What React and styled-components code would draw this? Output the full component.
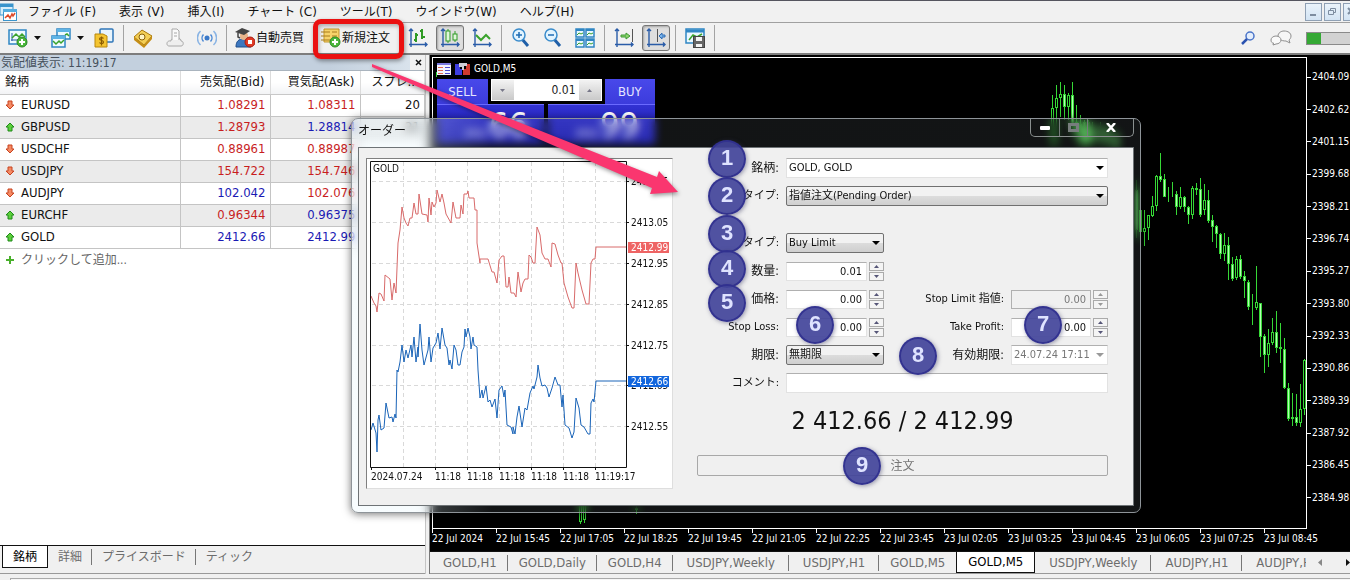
import React from 'react';
import styled, { createGlobalStyle, css } from 'styled-components';

const UI_FONT = "'DejaVu Sans Condensed', 'Noto Sans', 'Noto Sans CJK JP', sans-serif";
const WIDE_FONT = "'DejaVu Sans', 'Noto Sans CJK JP', sans-serif";

const GlobalStyle = createGlobalStyle`
  * {
    box-sizing: border-box;
  }

  body {
    margin: 0;
    overflow: hidden;
    background: #f0f0f0;
    color: #111;
    font-family: ${UI_FONT};
    font-size: 12px;
    line-height: 16px;
  }

  button,
  input,
  select {
    margin: 0;
    padding: 0;
    border: 0;
    border-radius: 0;
    background: none;
    color: inherit;
    font: inherit;
  }

  svg {
    display: block;
    flex: none;
  }
`;

const Page = styled.div`
  position: relative;
  display: flex;
  flex-direction: column;
  height: 100vh;
`;

/* Menu bar */

const MenuBar = styled.nav`
  display: flex;
  align-items: center;
  height: 23px;
  flex: none;
  border-top: 1px solid #55555f;
  border-bottom: 1px solid #a0a0a0;
  background: #f1f1f1;
  font-family: ${WIDE_FONT};
`;

const MenuItems = styled.div`
  display: flex;
  flex: 1;
  gap: 23px;
  margin-left: 10px;
`;

const MenuItem = styled.button`
  white-space: nowrap;
`;

const MdiButtons = styled.div`
  display: flex;
  gap: 2px;
  width: 45px;
  overflow: hidden;
`;

const MdiButton = styled.button`
  display: flex;
  align-items: center;
  justify-content: center;
  flex: none;
  width: 17px;
  height: 18px;
  border: 1px solid #8fa0b4;
  background: linear-gradient(#eaf3fb, #d3e4f4);
`;

/* Toolbar */

const Toolbar = styled.div`
  display: flex;
  align-items: center;
  flex: none;
  height: 32px;
  padding-left: 4px;
  border-bottom: 2px solid #7d7d7d;
  background: #f1f1f1;
`;

const ToolGroup = styled.div`
  display: flex;
  align-items: center;
  flex: 1;
  gap: 4px;
`;

const ToolWithMenu = styled.div`
  display: flex;
  align-items: center;
`;

const Tool = styled.button`
  display: flex;
  align-items: center;
  justify-content: center;
  flex: none;
  gap: 1px;
  min-width: 28px;
  height: 26px;
  padding: ${props => (props.$wide ? '0 10px 0 3px' : '0')};
  font-family: ${WIDE_FONT};
  white-space: nowrap;
  ${props => props.$pressed && css`
    border: 1px solid #767676;
    border-radius: 3px;
    background: #dedede;
    box-shadow: inset 1px 1px 2px #a8a8a8;
  `}
`;

const ToolCaret = styled.button`
  display: flex;
  justify-content: center;
  width: 11px;
`;

const ToolSeparator = styled.span`
  width: 1px;
  height: 26px;
  margin: 0 1px;
  background: #a3a3a3;
`;

const ToolStatus = styled.div`
  display: flex;
  align-items: center;
  gap: 14px;
`;

const Connection = styled.div`
  width: 44px;
  height: 13px;
  border: 1px solid #8a8a8a;
  border-right: 0;
  background: linear-gradient(90deg, #35a935 14px, #d2d2d2 14px);
`;

/* Work area */

const Workspace = styled.div`
  display: flex;
  flex: 1;
  min-height: 0;
`;

const WatchPanel = styled.section`
  display: flex;
  flex-direction: column;
  flex: none;
  width: 426px;
  border-right: 1px solid #c4c4c4;
  background: #fff;
`;

const WatchTitle = styled.header`
  display: flex;
  align-items: center;
  height: 16px;
  flex: none;
  padding-left: 1px;
  border-bottom: 1px solid #aab4be;
  background: linear-gradient(90deg, #c3d0de 330px, #d9e3ec 410px, #f0f0f0 410px);
  color: #46505c;
`;

const WatchHeading = styled.h2`
  flex: 1;
  margin: 0;
  font-size: 12px;
  font-weight: normal;
`;

const CloseButton = styled.button`
  display: flex;
  justify-content: center;
  width: 14px;
`;

const WatchTable = styled.table`
  width: 100%;
  table-layout: fixed;
  border-collapse: collapse;
  font-size: 13px;
`;

const HeadCell = styled.th`
  width: ${props => props.$width};
  height: 23px;
  padding: 0 5px;
  border-right: 1px solid #dcdcdc;
  border-bottom: 1px solid #c8c8c8;
  background: linear-gradient(#fff 50%, #f2f3f5);
  font-family: ${WIDE_FONT};
  font-size: 12px;
  font-weight: normal;
  text-align: ${props => props.$align};
  white-space: nowrap;
`;

const WatchRow = styled.tr`
  height: 22px;
  background: ${props => (props.$shaded ? '#ebebeb' : '#fff')};
`;

const SymbolCell = styled.td`
  padding: 0;
  border-right: 1px solid #c4c4c4;
  border-bottom: 1px solid #c4c4c4;
`;

const SymbolName = styled.div`
  display: flex;
  align-items: center;
  gap: 6px;
  padding-left: 5px;
  color: ${props => (props.$muted ? '#666' : 'inherit')};
`;

const QuoteCell = styled.td`
  padding: 0 4px 0 0;
  border-right: 1px solid #c4c4c4;
  border-bottom: 1px solid #c4c4c4;
  color: ${props => props.color};
  text-align: right;
`;

const AddSymbol = styled.button`
  flex: 1;
  display: flex;
  align-items: flex-start;
  padding-top: 3px;
`;

/* Bottom tabs, used by both the market watch and the chart area */

const TabBar = styled.div`
  display: flex;
  flex: none;
  height: ${props => props.$height}px;
  padding-left: 2px;
  border-top: 1px solid #111;
  border-bottom: 1px solid #999;
  background: #f0f0f0;
  overflow: hidden;
`;

const Tab = styled.button`
  position: relative;
  display: flex;
  align-items: center;
  justify-content: center;
  flex: none;
  height: ${props => props.$height}px;
  padding: 0 ${props => props.$pad}px;
  color: #6c6c6c;
  font-size: ${props => props.$size}px;
  white-space: nowrap;
  ${props => props.$separated && css`
    &::after {
      content: '';
      position: absolute;
      top: 3px;
      right: 0;
      width: 1px;
      height: 16px;
      background: #777;
    }
  `}
  ${props => props.$active && css`
    border: 1px solid #111;
    border-top: 0;
    background: #fff;
    color: #000;
  `}
`;

const TabClip = styled.div`
  display: flex;
  flex: 1;
  overflow: hidden;
`;

const TabScroll = styled.div`
  display: flex;
  align-items: center;
  justify-content: space-between;
  width: 44px;
  padding-left: 12px;
`;

/* Chart window */

const ChartColumn = styled.section`
  display: flex;
  flex-direction: column;
  flex: 1;
  min-width: 0;
  margin-left: 3px;
  border-left: 1px solid #777;
`;

const ChartWindow = styled.div`
  display: grid;
  grid-template-columns: 1fr 43px;
  grid-template-rows: 1fr 22px;
  flex: 1;
  min-height: 0;
  padding: 2px 0 0 2px;
  background: #000;
  color: #fff;
  font-size: 10px;
  line-height: 12px;
`;

const PlotArea = styled.div`
  position: relative;
  min-height: 0;
  border: 1px solid #fff;
`;

const Candles = styled.svg`
  position: absolute;
  inset: 0;
  width: 100%;
  height: 100%;
`;

const PriceAxis = styled.div`
  display: flex;
  flex-direction: column;
  padding: 4px 0 15px;
`;

const PriceTick = styled.div`
  display: flex;
  align-items: center;
  gap: 1px;
  flex: 1;

  &::before {
    content: '';
    width: 4px;
    height: 1px;
    background: #fff;
  }
`;

const TimeAxis = styled.div`
  display: flex;
  grid-column: 1 / -1;
`;

const TimeTick = styled.div`
  flex: none;
  width: 64px;
  white-space: nowrap;

  &::before {
    content: '';
    display: block;
    width: 1px;
    height: 4px;
    background: #fff;
  }
`;

/* One click trading */

const TradePanel = styled.div`
  position: relative;
  width: 222px;
  padding: 4px 0 0 4px;
`;

const TradeTitle = styled.div`
  display: flex;
  align-items: center;
  gap: 4px;
  height: 13px;
  margin-bottom: 4px;
`;

const TradeControls = styled.div`
  display: flex;
  gap: 3px;
  height: 25px;
`;

const TradeButton = styled.button`
  flex: 1;
  background: linear-gradient(#4848ea, #3c3cdc);
  color: #e6e6ff;
  font-size: 13px;
`;

const TradeVolume = styled.div`
  display: flex;
  width: 111px;
  height: 22px;
  padding: 1px;
  background: #fff;
`;

const TradeStep = styled.button`
  display: flex;
  align-items: center;
  justify-content: center;
  width: 22px;
  background: linear-gradient(#f3f3f3, #c9c9c9);
`;

const TradeInput = styled.input`
  flex: 1;
  min-width: 0;
  padding-right: 3px;
  color: #222;
  font-size: 12px;
  text-align: right;
`;

const TradePrices = styled.div`
  display: grid;
  grid-template-columns: 1fr 1fr;
  gap: 4px;
`;

const TradePrice = styled.div`
  display: flex;
  align-items: flex-end;
  justify-content: flex-end;
  gap: 2px;
  height: 40px;
  padding: 0 16px 4px 0;
  border-top: 1px solid #6a6aff;
  background: linear-gradient(#3232d2, #1818b0);
`;

const Pips = styled.span`
  font-size: 34px;
  line-height: 30px;
`;

/* Order window */

const OrderWindow = styled.section`
  position: absolute;
  left: 351px;
  top: 118px;
  width: 790px;
  padding: 0 6px 6px;
  border: 1px solid #8e9499;
  border-radius: 7px;
  background: linear-gradient(90deg, rgba(224, 244, 252, 0.25) 80px, rgba(150, 165, 175, 0.12) 140px);
  box-shadow: 0 1px 8px rgba(0, 0, 0, 0.55);
  backdrop-filter: blur(4px);
`;

const OrderTitle = styled.header`
  display: flex;
  height: 28px;
`;

const OrderHeading = styled.h1`
  flex: 1;
  margin: 0;
  padding-top: 4px;
  font-size: 12px;
  font-weight: normal;
`;

const WindowButtons = styled.div`
  display: flex;
  height: 18px;
  border: 1px solid #8a9090;
  border-top: 0;
  border-radius: 0 0 5px 5px;
`;

const WindowButton = styled.button`
  display: flex;
  align-items: center;
  justify-content: center;
  width: ${props => (props.$wide ? 46 : 28)}px;

  & + & {
    border-left: 1px solid #757b7b;
  }
`;

const OrderBody = styled.div`
  display: flex;
  justify-content: space-between;
  height: 359px;
  padding: 10px 25px 0 7px;
  border: 1px solid #6e7376;
  background: #f0f0f0;
`;

const TickPanel = styled.div`
  width: 307px;
  height: 331px;
  border: 1px solid #dedede;
  border-top-color: #808080;
  border-left-color: #808080;
  background: #fff;
`;

const OrderForm = styled.form`
  display: flex;
  flex-direction: column;
  width: 411px;
  font-size: 11px;
`;

const Fields = styled.div`
  display: grid;
  grid-template-columns: 82px 98px 1fr 97px;
  grid-auto-rows: 20px;
  align-items: center;
  gap: 8px 7px;
  margin-bottom: ${props => props.$after}px;
`;

const Label = styled.label`
  font-size: ${props => (props.$small ? 11 : 12)}px;
  text-align: right;
  white-space: nowrap;
`;

const SelectBox = styled.div`
  position: relative;
  grid-column: ${props => (props.$full ? '2 / -1' : 'auto')};

  &::after {
    content: '';
    position: absolute;
    top: 8px;
    right: 4px;
    border: 4px solid transparent;
    border-top-color: ${props => (props.$off ? '#999' : '#000')};
    border-bottom: 0;
    pointer-events: none;
  }
`;

const Select = styled.select`
  appearance: none;
  display: block;
  width: 100%;
  height: 20px;
  padding-left: 2px;
  border: 1px solid #e2e2e2;
  border-top-color: #b0b0b0;
  background: #fff;
  color: ${props => (props.$off ? '#777' : '#111')};
  opacity: 1;
  ${props => props.$button && css`
    border: 1px solid #707070;
    border-radius: 2px;
    background: linear-gradient(#f2f2f2 48%, #dcdcdc 52%, #cfcfcf);
  `}
`;

const TextInput = styled.input`
  grid-column: 2 / -1;
  height: 20px;
  border: 1px solid #e2e2e2;
  border-top-color: #b0b0b0;
  background: #fff;
`;

const Stepper = styled.div`
  display: flex;
  gap: 2px;
`;

const StepperInput = styled.input`
  flex: 1;
  min-width: 0;
  height: 19px;
  padding-right: 4px;
  border: 1px solid #e2e2e2;
  border-top-color: #b0b0b0;
  background: #fff;
  text-align: right;

  &:disabled {
    border-color: #b0b0b0;
    background: #f0f0f0;
    color: #777;
  }
`;

const StepperButtons = styled.div`
  display: grid;
  width: 15px;
  height: 19px;
  gap: 1px;
`;

const StepperButton = styled.button`
  display: flex;
  align-items: center;
  justify-content: center;
  border: 1px solid #aaa;
  background: #f4f4f4;
`;

const PriceLine = styled.output`
  margin-bottom: 18px;
  font-size: 25px;
  line-height: 32px;
  text-align: center;
`;

const SubmitButton = styled.button`
  height: 21px;
  border: 1px solid #a8a8a8;
  border-radius: 2px;
  background: #f0f0f0;
  color: #777;
  font-size: 12px;
`;

/* Annotations drawn over everything */

const Highlight = styled.div`
  position: absolute;
  left: 313px;
  top: 19px;
  width: 91px;
  height: 40px;
  border: 5px solid #ea1010;
  border-radius: 8px;
  box-shadow: 1px 2px 4px rgba(0, 0, 0, 0.4), inset 1px 2px 4px rgba(0, 0, 0, 0.3);
  pointer-events: none;
`;

const Arrow = styled.svg`
  position: absolute;
  left: 366px;
  top: 60px;
  filter: drop-shadow(1px 2px 2px rgba(0, 0, 0, 0.4));
  pointer-events: none;
`;

const Badge = styled.span`
  position: absolute;
  left: ${props => props.$x}px;
  top: ${props => props.$y}px;
  width: 38px;
  height: 38px;
  margin: -19px 0 0 -19px;
  border: 2px solid rgba(48, 48, 142, 0.9);
  border-radius: 50%;
  background: rgba(66, 68, 154, 0.92);
  box-shadow: 1px 1px 4px rgba(60, 60, 100, 0.5);
  color: #dfe3ff;
  font-family: 'Liberation Sans', sans-serif;
  font-size: 22px;
  font-weight: bold;
  line-height: 32px;
  text-align: center;
`;

const StatusBar = styled.footer`
  flex: none;
  height: 6px;
  padding: 4px 0 0 10px;

  &::before {
    content: '';
    display: block;
    height: 2px;
    border-top: 1px solid #aaa;
    border-left: 1px solid #aaa;
    background: #f6f6f6;
  }
`;

const RED = '#c81e1e';
const BLUE = '#1a1ab4';

const quotes = [
  { name: 'EURUSD', up: false, bid: '1.08291', ask: '1.08311', bidColor: RED, askColor: RED, spread: 20 },
  { name: 'GBPUSD', up: true, bid: '1.28793', ask: '1.28814', bidColor: RED, askColor: BLUE, spread: 21 },
  { name: 'USDCHF', up: false, bid: '0.88961', ask: '0.88987', bidColor: RED, askColor: RED },
  { name: 'USDJPY', up: false, bid: '154.722', ask: '154.746', bidColor: RED, askColor: RED },
  { name: 'AUDJPY', up: false, bid: '102.042', ask: '102.076', bidColor: BLUE, askColor: RED },
  { name: 'EURCHF', up: true, bid: '0.96344', ask: '0.96375', bidColor: RED, askColor: BLUE },
  { name: 'GOLD', up: true, bid: '2412.66', ask: '2412.99', bidColor: BLUE, askColor: BLUE },
];

const menus = ['ファイル (F)', '表示 (V)', '挿入(I)', 'チャート (C)', 'ツール(T)', 'ウインドウ(W)', 'ヘルプ(H)'];

const watchTabs = ['銘柄', '詳細', 'プライスボード', 'ティック'];

const chartTabs = [
  'GOLD,H1', 'GOLD,Daily', 'GOLD,H4', 'USDJPY,Weekly', 'USDJPY,H1', 'GOLD,M5',
  'GOLD,M5', 'USDJPY,Weekly', 'AUDJPY,H1', 'AUDJPY,H4',
];
const ACTIVE_CHART = 6;

const prices = [
  '2404.09', '2402.62', '2401.15', '2399.68', '2398.21', '2396.74', '2395.27',
  '2393.80', '2392.33', '2390.86', '2389.39', '2387.92', '2386.45', '2384.98',
];

const times = [
  '22 Jul 2024', '22 Jul 15:45', '22 Jul 17:05', '22 Jul 18:25', '22 Jul 19:45', '22 Jul 21:05', '22 Jul 22:25',
  '22 Jul 23:45', '23 Jul 02:05', '23 Jul 03:25', '23 Jul 04:45', '23 Jul 06:05', '23 Jul 07:25', '23 Jul 08:45',
];

// x, high, low, body top, body bottom, falling
const candles = [
  [432, 101, 108, 101, 101, 0], [436, 72, 77, 77, 77, 0],
  [580, 500, 524, 505, 522, 0], [584, 498, 523, 500, 520, 0], [636, 505, 514, 508, 510, 0],
  [1052, 95, 148, 108, 140, 0], [1056, 85, 146, 98, 108, 0], [1060, 82, 117, 94, 98, 0],
  [1064, 85, 120, 94, 107, 1], [1068, 93, 120, 95, 107, 0], [1072, 82, 135, 95, 125, 1],
  [1076, 105, 140, 122, 132, 1], [1080, 115, 146, 124, 142, 1], [1084, 120, 146, 122, 144, 1],
  [1088, 120, 146, 122, 144, 1], [1092, 122, 145, 128, 140, 1], [1100, 122, 146, 126, 142, 1],
  [1108, 124, 148, 128, 144, 1], [1116, 130, 150, 134, 148, 1], [1136, 180, 238, 190, 230, 1],
  [1140, 190, 240, 210, 232, 0],
  [1144, 210, 246, 228, 232, 0], [1148, 215, 240, 215, 228, 0], [1152, 196, 217, 206, 216, 0],
  [1156, 175, 211, 176, 206, 0], [1160, 153, 182, 176, 180, 1], [1164, 174, 197, 179, 197, 1],
  [1168, 187, 202, 196, 197, 0], [1172, 182, 197, 194, 195, 0], [1176, 191, 215, 194, 207, 1],
  [1180, 187, 209, 197, 207, 0], [1184, 196, 212, 197, 207, 1], [1188, 206, 224, 207, 215, 1],
  [1192, 186, 219, 188, 215, 0], [1196, 183, 195, 188, 190, 0], [1200, 178, 217, 189, 215, 1],
  [1204, 184, 215, 200, 210, 0], [1208, 190, 223, 200, 221, 1], [1212, 215, 242, 220, 227, 1],
  [1216, 225, 248, 226, 234, 1], [1220, 233, 259, 234, 254, 1], [1224, 233, 261, 245, 254, 0],
  [1228, 237, 280, 245, 264, 1], [1232, 257, 281, 264, 279, 1], [1236, 256, 280, 259, 278, 0],
  [1240, 255, 279, 259, 277, 1], [1244, 271, 298, 276, 281, 1], [1248, 280, 310, 282, 307, 1],
  [1252, 294, 325, 306, 307, 0], [1256, 266, 310, 302, 308, 0], [1260, 303, 357, 303, 337, 1],
  [1264, 334, 373, 336, 355, 1], [1268, 329, 367, 343, 355, 0], [1272, 318, 345, 332, 343, 0],
  [1276, 311, 353, 332, 348, 1], [1280, 323, 363, 347, 349, 0], [1284, 338, 389, 349, 388, 1],
  [1288, 383, 421, 388, 419, 1], [1292, 393, 426, 417, 419, 0], [1296, 394, 426, 417, 423, 1],
  [1300, 384, 427, 409, 423, 0], [1304, 359, 415, 360, 409, 0],
];

const askLine = `371,296 374,303 376,306 377,312 379,293 381,294 384,301 385,275 390,279 392,300 394,283 396,293
  398,243 400,230 402,207 404,218 406,223 408,226 410,218 412,218 414,203 416,214 418,214 419,194 422,214 427,215
  428,222 429,198 431,215 432,202 434,207 436,203 437,190 440,202 442,194 444,203 446,214 451,223 453,202 456,218
  460,218 461,205 463,214 464,194 467,194 468,191 469,198 474,198 475,210 477,210 477,243 480,263 480,259 488,259
  492,272 494,272 497,283 499,260 502,256 504,256 506,287 508,287 509,277 511,293 514,293 516,297 518,272 521,292
  523,283 525,279 528,279 529,255 531,257 533,263 535,263 537,227 540,235 542,253 545,259 548,259 551,267 552,243
  555,244 558,255 561,263 562,263 564,283 568,297 572,308 574,308 576,263 578,273 582,290 586,304 589,304 591,263
  593,259 595,259 596,247 626,247`;

const bidLine = `371,430 373,423 376,433 377,452 378,420 379,415 381,430 384,428 386,403 389,418 392,417 393,422
  395,414 396,418 397,370 398,372 400,362 402,345 404,362 406,350 408,358 411,345 412,357 414,337 416,362 418,347
  418,357 420,324 422,350 424,365 428,350 429,337 431,362 433,348 436,343 438,333 440,349 442,328 445,345 447,348
  449,365 450,360 452,369 454,345 456,350 458,365 460,365 462,352 464,347 465,329 466,337 468,328 470,337 471,349
  473,337 474,345 477,347 478,370 480,398 482,390 483,398 486,386 488,402 490,400 492,407 495,399 497,418 499,390
  502,386 504,397 505,390 507,425 511,427 513,434 513,427 515,434 517,417 519,406 522,427 525,408 527,410 530,393
  533,386 534,389 537,377 538,365 540,378 542,386 545,385 547,388 549,397 552,388 555,377 558,385 560,385 562,407
  563,395 565,425 569,428 572,438 574,432 576,398 579,408 581,425 584,427 588,434 590,434 591,403 593,399 594,402
  596,381 626,381`;

const tickLevels = [
  [181, '2413.15'], [222, '2413.05'], [263, '2412.95'], [304, '2412.85'],
  [345, '2412.75'], [385, '2412.65'], [426, '2412.55'],
];

const tickTimes = [
  [371, '2024.07.24'], [435, '11:18'], [467, '11:18'], [499, '11:18'],
  [531, '11:18'], [563, '11:18'], [595, '11:19:17'],
];

const badges = [
  [727, 159], [727, 196], [727, 234], [727, 269], [727, 303], [815, 325], [1043, 325], [918, 356], [862, 466],
];

/* Icons */

const Svg = ({ w = 20, h = 20, children }) => (
  <svg width={w} height={h} viewBox={`0 0 ${w} ${h}`} fill="none" aria-hidden="true">
    {children}
  </svg>
);

const Triangle = ({ up, color = '#111', w = 7, h = 4 }) => (
  <Svg w={w} h={h}>
    <path d={up ? `M0 ${h}H${w}L${w / 2} 0Z` : `M0 0H${w}L${w / 2} ${h}Z`} fill={color} />
  </Svg>
);

const PlusBall = ({ x, y }) => (
  <g>
    <circle cx={x} cy={y} r="5" fill="#4cb83c" stroke="#2a8a22" />
    <path d={`M${x - 3} ${y}h6M${x} ${y - 3}v6`} stroke="#fff" strokeWidth="2" />
  </g>
);

const AxisLines = () => (
  <path d="M3 1v18M1 16.500h18M1 3l2-2 2 2M17 14.500l2 2-2 2" stroke="#2a5ca8" strokeWidth="1.400" />
);

const AppIcon = () => (
  <Svg w={18} h={18}>
    <rect x="0" y="1" width="13" height="11" fill="#d8eefa" stroke="#3a94cc" />
    <rect x="0" y="1" width="13" height="3" fill="#3a94cc" />
    <rect x="3.500" y="6.500" width="13" height="11" fill="#fff" stroke="#3a94cc" />
    <rect x="3" y="6" width="14" height="3" fill="#55aee0" />
    <path d="M5 15l3-3 2 3 2-4 1 2 2-3" stroke="#dd4a2a" strokeWidth="1.500" />
  </Svg>
);

const NewChartIcon = () => (
  <Svg>
    <rect x="1" y="2" width="17" height="14" fill="#eefaff" stroke="#2f86c4" strokeWidth="1.500" />
    <path d="M4 5v8M3 12h12" stroke="#2a5ca8" />
    <path d="M4 10l4-4 3 3 3-3 3 3" stroke="#3aa32c" strokeWidth="1.500" />
    <PlusBall x={14} y={14} />
  </Svg>
);

const ProfilesIcon = () => (
  <Svg>
    <rect x="6" y="1" width="13" height="10" fill="#eefaff" stroke="#2f86c4" strokeWidth="1.500" />
    <rect x="6" y="1" width="13" height="3" fill="#5fb4e6" />
    <path d="M14 7l2-1 2 2" stroke="#3aa32c" strokeWidth="1.500" />
    <rect x="1" y="8" width="13" height="11" fill="#eefaff" stroke="#2f86c4" strokeWidth="1.500" />
    <rect x="1" y="8" width="13" height="3" fill="#5fb4e6" />
    <path d="M2 13l3 3 3-3 2 2 3-3" stroke="#3aa32c" strokeWidth="1.500" />
  </Svg>
);

const MoneyIcon = () => (
  <Svg>
    <rect x="6" y="1" width="13" height="13" rx="1" fill="#e8f4fc" stroke="#2f76b8" strokeWidth="1.500" />
    <path d="M1 6h8l4 2v11H1z" fill="#f4c430" stroke="#b8860b" />
    <path d="M9.500 10.500c-1-1.500-4-1-4 .500s4 1 4 3-3 2-4 .500M7.500 8.500v9" stroke="#8a5a00" strokeWidth="1.200" />
  </Svg>
);

const TagIcon = () => (
  <Svg>
    <path d="M1 9L9 2l10 6-8 9z" fill="#f4cf55" stroke="#a9780c" />
    <path d="M1 9l10 8v3L1 12zM11 17l8-9v3l-8 9z" fill="#c58e16" />
    <circle cx="9" cy="9" r="3" fill="#fff4c4" stroke="#8a6008" />
  </Svg>
);

const CloudIcon = () => (
  <Svg>
    <path d="M4 18h12c3 0 3-5 0-5 0-3-4-4-5-2-3-2-5 0-5 2-5-1-5 5-2 5z" fill="#eee" stroke="#a8a8a8" />
    <path d="M7 12V1h5l2 2v9" fill="#fafafa" stroke="#a8a8a8" />
    <path d="M9 5h3M9 8h3" stroke="#a8a8a8" />
  </Svg>
);

const SignalIcon = () => (
  <Svg>
    <circle cx="10" cy="10" r="2.500" fill="#3a78c8" />
    <path d="M6.500 13.500a5 5 0 010-7M13.500 6.500a5 5 0 010 7" stroke="#4a88d4" strokeWidth="1.500" />
    <path d="M3.500 17a9.500 9.500 0 010-14M16.500 3a9.500 9.500 0 010 14" stroke="#8ab4e4" strokeWidth="1.500" />
  </Svg>
);

const ExpertIcon = () => (
  <Svg>
    <path d="M1 19c0-6 3-8 7-8s8 2 8 8z" fill="#3d78c0" stroke="#1f4e8c" />
    <circle cx="9" cy="8" r="4" fill="#e8b48a" />
    <path d="M0 4l7-4 8 3-6 4z" fill="#444" />
    <path d="M3 5v4l2 1" stroke="#444" strokeWidth="1.500" />
    <circle cx="15" cy="14" r="5" fill="#e03a24" stroke="#a81c10" />
    <rect x="13" y="12" width="4" height="4" fill="#fff" />
  </Svg>
);

const OrderIcon = () => (
  <Svg>
    <path d="M3 1h15v13H3z" fill="#f6d36a" stroke="#c2952a" />
    <path d="M0 4h9M0 8h9M0 12h9M11 4h5M11 8h5" stroke="#a77c1c" strokeWidth="1.200" />
    <PlusBall x={14} y={14} />
  </Svg>
);

const BarsIcon = () => (
  <Svg>
    <AxisLines />
    <path d="M8 5v9M6 12h2M8 7h2M14 1v10M12 3h2M14 9h3" stroke="#2f9a24" strokeWidth="2" />
  </Svg>
);

const CandlesIcon = () => (
  <Svg>
    <AxisLines />
    <path d="M8 1v14M15 3v11" stroke="#2f9a24" />
    <rect x="6" y="3" width="4" height="10" fill="#dff6da" stroke="#2f9a24" />
    <rect x="13" y="6" width="4" height="6" fill="#dff6da" stroke="#2f9a24" />
  </Svg>
);

const LineIcon = () => (
  <Svg>
    <AxisLines />
    <path d="M4 7l5 5 5-5 4 4" stroke="#3aa32c" strokeWidth="2" />
  </Svg>
);

const ZoomIcon = ({ plus }) => (
  <Svg>
    <path d="M11 11l6 7" stroke="#1f5fa8" strokeWidth="3" />
    <circle cx="8" cy="7" r="6" fill="#e2f4ff" stroke="#3a8ccc" strokeWidth="1.500" />
    <path d={plus ? 'M5 7h6M8 4v6' : 'M5 7h6'} stroke="#1f6cb4" strokeWidth="1.500" />
  </Svg>
);

const TileIcon = () => (
  <Svg>
    {[[0, 0], [10, 0], [0, 10], [10, 10]].map(([x, y]) => (
      <g key={`${x}-${y}`}>
        <rect x={x + 1} y={y + 1} width="8" height="8" fill="#e9f8ff" stroke="#2f86c4" strokeWidth="1.500" />
        <path d={`M${x + 1} ${y + 2}h8`} stroke="#2f86c4" strokeWidth="2" />
        <path d={`M${x + 2} ${y + 7}l2-2 2 1 2-1`} stroke="#3aa32c" />
      </g>
    ))}
  </Svg>
);

const ShiftIcon = () => (
  <Svg>
    <AxisLines />
    <path d="M18.500 1v13" stroke="#555" />
    <path d="M7 7h5V5l4 3-4 3V9H7z" fill="#8ad46c" stroke="#3f9a34" />
  </Svg>
);

const OffsetIcon = () => (
  <Svg>
    <AxisLines />
    <path d="M11.500 1v13" stroke="#555" />
    <path d="M19 7h-3V5l-3 3 3 3V9h3z" fill="#7ab4ec" stroke="#2f6cb4" />
  </Svg>
);

const TemplateIcon = () => (
  <Svg>
    <rect x="1" y="1" width="18" height="14" fill="#eaf8ff" stroke="#2f86c4" strokeWidth="1.500" />
    <path d="M1 3h18" stroke="#2f86c4" strokeWidth="3" />
    <path d="M4 12l4-5 4 2 5-3" stroke="#3aa32c" strokeWidth="1.500" />
    <rect x="8.500" y="8.500" width="11" height="11" fill="#666" stroke="#444" />
    <path d="M11 9h6v4h-6zM11 16h6v3h-6z" fill="#f4f4f4" />
  </Svg>
);

const SearchIcon = () => (
  <Svg w={15} h={15}>
    <circle cx="9" cy="5" r="4" fill="#e4eefc" stroke="#4a74c8" strokeWidth="1.500" />
    <path d="M6 8l-5 5" stroke="#2a52b0" strokeWidth="2.500" />
  </Svg>
);

const ChatIcon = () => (
  <Svg w={22} h={16}>
    <path d="M14 1c4 0 7 2 7 5 0 2-1 3-2 4l1 3-4-2c-5 0-8-2-8-5s3-5 6-5z" fill="#f6f6f6" stroke="#8e8e8e" />
    <path d="M6 6c3 0 5 2 5 4s-2 4-5 4l-3 1 .500-2C2 13 1 12 1 10c0-2 2-4 5-4z" fill="#fafafa" stroke="#8e8e8e" />
  </Svg>
);

const DirectionIcon = ({ up }) => (
  <Svg w={10} h={10}>
    {up
      ? <path d="M5 1l4 4H7v4H3V5H1z" fill="#5cd03c" stroke="#1f8a18" />
      : <path d="M5 9l4-4H7V1H3v4H1z" fill="#f48a64" stroke="#c8421e" />}
  </Svg>
);

const AddIcon = () => (
  <Svg w={10} h={10}>
    <path d="M1 5h8M5 1v8" stroke="#4ab02c" strokeWidth="2" />
  </Svg>
);

const DepthIcon = () => (
  <Svg w={14} h={12}>
    <rect width="14" height="12" fill="#f4f4ff" />
    <path d="M0 1h14" stroke="#7a7ae0" strokeWidth="2" />
    <path d="M1 4.500h5M1 7.500h5M1 10.500h5" stroke="#e06a50" />
    <path d="M8 4.500h5M8 7.500h5M8 10.500h5" stroke="#4a4ad0" />
  </Svg>
);

const OneClickIcon = () => (
  <Svg w={15} h={12}>
    <path d="M0 1h5v5h2v6H0z" fill="#3d3de0" />
    <path d="M8 6h3V1h4v11H8z" fill="#d03a30" />
    <path d="M4 0h8v3H9v4H7V4H4z" fill="#cfcfd6" />
  </Svg>
);

const MarketWatch = () => (
  <WatchPanel>
    <WatchTitle>
      <WatchHeading>気配値表示: 11:19:17</WatchHeading>
      <CloseButton aria-label="閉じる">
        <Svg w={7} h={7}>
          <path d="M1 1l5 5M6 1L1 6" stroke="#111" strokeWidth="1.500" />
        </Svg>
      </CloseButton>
    </WatchTitle>
    <WatchTable>
      <thead>
        <tr>
          <HeadCell $width="180px" $align="left">銘柄</HeadCell>
          <HeadCell $width="90px" $align="right">売気配(Bid)</HeadCell>
          <HeadCell $width="90px" $align="right">買気配(Ask)</HeadCell>
          <HeadCell $width="auto" $align="right">スプレ...</HeadCell>
        </tr>
      </thead>
      <tbody>
        {quotes.map((q, i) => (
          <WatchRow key={q.name} $shaded={i % 2 === 1}>
            <SymbolCell>
              <SymbolName>
                <DirectionIcon up={q.up} />
                {q.name}
              </SymbolName>
            </SymbolCell>
            <QuoteCell color={q.bidColor}>{q.bid}</QuoteCell>
            <QuoteCell color={q.askColor}>{q.ask}</QuoteCell>
            <QuoteCell color="#111">{q.spread}</QuoteCell>
          </WatchRow>
        ))}
      </tbody>
    </WatchTable>
    <AddSymbol>
      <SymbolName $muted>
        <AddIcon />
        クリックして追加...
      </SymbolName>
    </AddSymbol>
    <TabBar $height={29}>
      {watchTabs.map((tab, i) => (
        <Tab key={tab} $size={12} $height={22} $pad={10} $active={i === 0} $separated={i === 1 || i === 2}>{tab}</Tab>
      ))}
    </TabBar>
  </WatchPanel>
);

const OneClickTrading = () => (
  <TradePanel>
    <TradeTitle>
      <DepthIcon />
      <OneClickIcon />
      GOLD,M5
    </TradeTitle>
    <TradeControls>
      <TradeButton>SELL</TradeButton>
      <TradeVolume>
        <TradeStep aria-label="減らす"><Triangle w={5} h={3} color="#778" /></TradeStep>
        <TradeInput defaultValue="0.01" aria-label="数量" />
        <TradeStep aria-label="増やす"><Triangle up w={5} h={3} color="#778" /></TradeStep>
      </TradeVolume>
      <TradeButton>BUY</TradeButton>
    </TradeControls>
    <TradePrices>
      <TradePrice>2412<Pips>66</Pips></TradePrice>
      <TradePrice>2412<Pips>99</Pips></TradePrice>
    </TradePrices>
  </TradePanel>
);

const Chart = () => (
  <ChartColumn>
    <ChartWindow>
      <PlotArea>
        <Candles viewBox="433 58 873 460" preserveAspectRatio="xMaxYMin meet">
          {candles.map(([x, high, low, top, bottom, falling]) => (
            <g key={x} stroke="#36d836">
              <path d={`M${x + 0.5} ${high}V${low}`} />
              <rect
                x={x - 0.5}
                y={top + 0.5}
                width="2"
                height={Math.max(bottom - top - 1, 0)}
                fill={falling ? '#b4ffb4' : '#000'}
              />
            </g>
          ))}
        </Candles>
        <OneClickTrading />
      </PlotArea>
      <PriceAxis>
        {prices.map(p => <PriceTick key={p}>{p}</PriceTick>)}
      </PriceAxis>
      <TimeAxis>
        {times.map(t => <TimeTick key={t}>{t}</TimeTick>)}
      </TimeAxis>
    </ChartWindow>
    <TabBar $height={23}>
      <TabClip>
        {chartTabs.map((tab, i) => (
          <Tab
            key={i}
            $size={13}
            $height={21}
            $pad={tab.includes('JPY') ? 14 : 11}
            $active={i === ACTIVE_CHART}
            $separated={i !== ACTIVE_CHART && i !== ACTIVE_CHART - 1}
          >
            {tab}
          </Tab>
        ))}
      </TabClip>
      <TabScroll>
        <Svg w={4} h={7}><path d="M4 0v7L0 3.500z" fill="#888" /></Svg>
        <Svg w={4} h={7}><path d="M0 0v7l4-3.500z" fill="#111" /></Svg>
      </TabScroll>
    </TabBar>
  </ChartColumn>
);

const TickChart = () => (
  <TickPanel>
    <svg width="305" height="329" viewBox="367 159 305 329" fill="none" fontSize="10">
      <g stroke="#d9d9d9" strokeDasharray="4 3">
        {[403, 435, 467, 499, 531, 563, 595].map(x => <path key={x} d={`M${x + 0.5} 162V467`} />)}
        {tickLevels.map(([y]) => <path key={y} d={`M372 ${y + 0.5}H626`} />)}
      </g>
      <polyline points={askLine} stroke="#d86a6a" />
      <polyline points={bidLine} stroke="#1a64b8" />
      <path d="M370.500 161.500H626.500V467.500H370.500Z" stroke="#111" />
      <g fill="#111">
        <text x="373" y="172">GOLD</text>
        {tickLevels.map(([y, text]) => (
          <g key={y}>
            <path d={`M627 ${y + 0.5}h2`} stroke="#111" />
            <text x="631" y={y + 4}>{text}</text>
          </g>
        ))}
        {tickTimes.map(([x, text]) => (
          <g key={x}>
            <path d={`M${x + 0.5} 468v2`} stroke="#111" />
            <text x={x} y="480">{text}</text>
          </g>
        ))}
      </g>
      <rect x="628" y="242" width="41" height="11" fill="#ee6464" />
      <rect x="628" y="376" width="41" height="11" fill="#1266dd" />
      <g fill="#fff">
        <text x="631" y="251">2412.99</text>
        <text x="631" y="385">2412.66</text>
      </g>
    </svg>
  </TickPanel>
);

const NumberField = ({ id, value, disabled }) => (
  <Stepper>
    <StepperInput id={id} defaultValue={value} disabled={disabled} />
    <StepperButtons>
      <StepperButton type="button" disabled={disabled} aria-label="増やす">
        <Triangle up w={5} h={3} color={disabled ? '#999' : '#557'} />
      </StepperButton>
      <StepperButton type="button" disabled={disabled} aria-label="減らす">
        <Triangle w={5} h={3} color={disabled ? '#999' : '#557'} />
      </StepperButton>
    </StepperButtons>
  </Stepper>
);

const Dropdown = ({ id, value, full, button, off }) => (
  <SelectBox $full={full} $off={off}>
    <Select id={id} $button={button} $off={off} disabled={off}>
      <option>{value}</option>
    </Select>
  </SelectBox>
);

const OrderDialog = () => (
  <OrderWindow>
    <OrderTitle>
      <OrderHeading>オーダー</OrderHeading>
      <WindowButtons>
        <WindowButton aria-label="最小化">
          <Svg w={10} h={4}><rect width="10" height="4" rx="1" fill="#fff" /></Svg>
        </WindowButton>
        <WindowButton aria-label="最大化" disabled>
          <Svg w={11} h={9}><rect x="1.500" y="1.500" width="8" height="6" stroke="#777d7d" strokeWidth="3" /></Svg>
        </WindowButton>
        <WindowButton aria-label="閉じる" $wide>
          <Svg w={10} h={9}><path d="M1 0l8 9M9 0L1 9" stroke="#fff" strokeWidth="2.500" /></Svg>
        </WindowButton>
      </WindowButtons>
    </OrderTitle>
    <OrderBody>
      <TickChart />
      <OrderForm onSubmit={e => e.preventDefault()}>
        <Fields $after={27}>
          <Label htmlFor="symbol">銘柄:</Label>
          <Dropdown id="symbol" value="GOLD, GOLD" full />
          <Label htmlFor="kind" $small>タイプ:</Label>
          <Dropdown id="kind" value="指値注文(Pending Order)" full button />
        </Fields>
        <Fields $after={12}>
          <Label htmlFor="pending" $small>タイプ:</Label>
          <Dropdown id="pending" value="Buy Limit" button />
          <span />
          <span />
          <Label htmlFor="volume">数量:</Label>
          <NumberField id="volume" value="0.01" />
          <span />
          <span />
          <Label htmlFor="price">価格:</Label>
          <NumberField id="price" value="0.00" />
          <Label htmlFor="stop-limit" $small>Stop Limit 指値:</Label>
          <NumberField id="stop-limit" value="0.00" disabled />
          <Label htmlFor="stop-loss" $small>Stop Loss:</Label>
          <NumberField id="stop-loss" value="0.00" />
          <Label htmlFor="take-profit" $small>Take Profit:</Label>
          <NumberField id="take-profit" value="0.00" />
          <Label htmlFor="expiry">期限:</Label>
          <Dropdown id="expiry" value="無期限" button />
          <Label htmlFor="expiry-date">有効期限:</Label>
          <Dropdown id="expiry-date" value="24.07.24 17:11" off />
          <Label htmlFor="comment" $small>コメント:</Label>
          <TextInput id="comment" />
        </Fields>
        <PriceLine>2 412.66 / 2 412.99</PriceLine>
        <SubmitButton disabled>注文</SubmitButton>
      </OrderForm>
    </OrderBody>
  </OrderWindow>
);

export default function App() {
  return (
    <Page>
      <GlobalStyle />
      <MenuBar>
        <AppIcon />
        <MenuItems>
          {menus.map(m => <MenuItem key={m}>{m}</MenuItem>)}
        </MenuItems>
        <MdiButtons>
          <MdiButton aria-label="最小化">
            <Svg w={7} h={9}><path d="M0 8h6" stroke="#7d8da0" strokeWidth="2" /></Svg>
          </MdiButton>
          <MdiButton aria-label="元に戻す">
            <Svg w={9} h={9}><path d="M2.500 3V1.500h5v4H6M.500 3.500h5v4h-5z" stroke="#7d8da0" /></Svg>
          </MdiButton>
          <MdiButton aria-label="閉じる">
            <Svg w={9} h={9}><path d="M1 1l6 6M7 1L1 7" stroke="#7d8da0" strokeWidth="2" /></Svg>
          </MdiButton>
        </MdiButtons>
      </MenuBar>
      <Toolbar>
        <ToolGroup>
          <ToolWithMenu>
            <Tool aria-label="新規チャート"><NewChartIcon /></Tool>
            <ToolCaret aria-label="チャートの選択"><Triangle /></ToolCaret>
          </ToolWithMenu>
          <ToolWithMenu>
            <Tool aria-label="チャート組表示"><ProfilesIcon /></Tool>
            <ToolCaret aria-label="組表示の選択"><Triangle /></ToolCaret>
          </ToolWithMenu>
          <Tool aria-label="入金"><MoneyIcon /></Tool>
          <ToolSeparator />
          <Tool aria-label="マーケット"><TagIcon /></Tool>
          <Tool aria-label="VPS"><CloudIcon /></Tool>
          <Tool aria-label="シグナル"><SignalIcon /></Tool>
          <ToolSeparator />
          <Tool $wide><ExpertIcon />自動売買</Tool>
          <Tool $wide><OrderIcon />新規注文</Tool>
          <Tool aria-label="バーチャート"><BarsIcon /></Tool>
          <Tool aria-label="ローソク足" $pressed><CandlesIcon /></Tool>
          <Tool aria-label="ラインチャート"><LineIcon /></Tool>
          <ToolSeparator />
          <Tool aria-label="拡大"><ZoomIcon plus /></Tool>
          <Tool aria-label="縮小"><ZoomIcon /></Tool>
          <Tool aria-label="整列"><TileIcon /></Tool>
          <ToolSeparator />
          <Tool aria-label="自動スクロール"><ShiftIcon /></Tool>
          <Tool aria-label="チャートシフト" $pressed><OffsetIcon /></Tool>
          <ToolSeparator />
          <Tool aria-label="テンプレート"><TemplateIcon /></Tool>
          <ToolSeparator />
        </ToolGroup>
        <ToolStatus>
          <SearchIcon />
          <ChatIcon />
          <Connection />
        </ToolStatus>
      </Toolbar>
      <Workspace>
        <MarketWatch />
        <Chart />
      </Workspace>
      <StatusBar />
      <OrderDialog />
      <Highlight />
      <Arrow width="320" height="140" viewBox="366 60 320 140">
        <path d="M372 64L657 177 659 171 678 192 650 194 652 188 372 67Z" fill="#fa366f" />
      </Arrow>
      {badges.map(([x, y], i) => <Badge key={y + x} $x={x} $y={y}>{i + 1}</Badge>)}
    </Page>
  );
}
